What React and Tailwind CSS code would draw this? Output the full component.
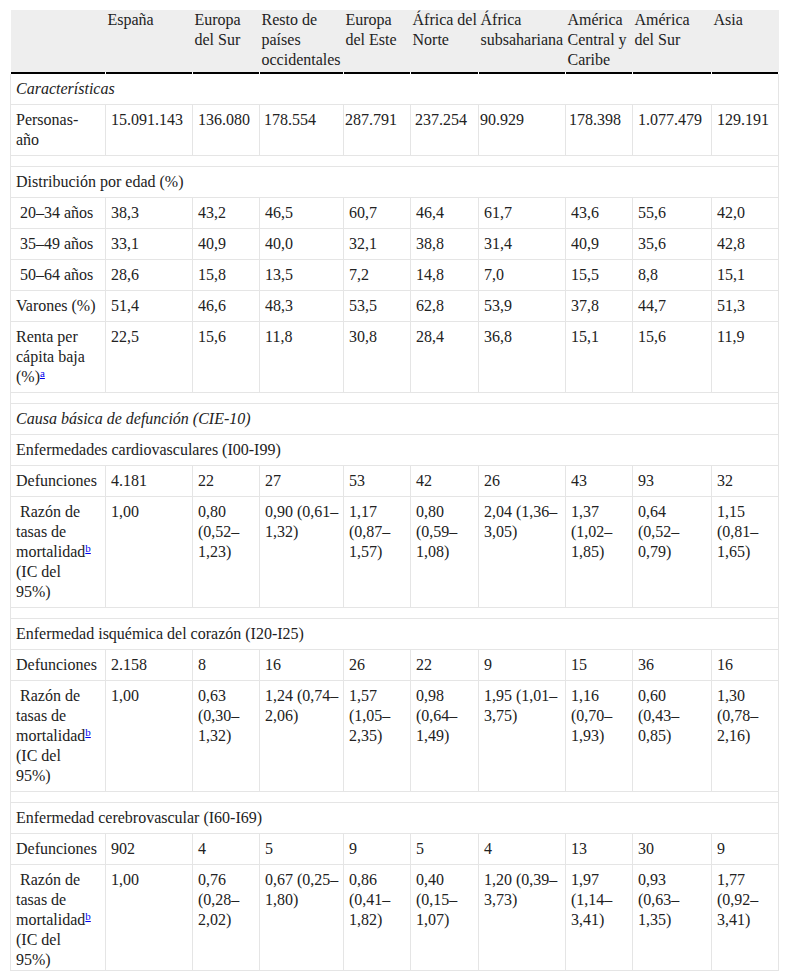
const cols = [
  "España",
  "Europa\ndel Sur",
  "Resto de\npaíses\noccidentales",
  "Europa\ndel Este",
  "África del\nNorte",
  "África\nsubsahariana",
  "América\nCentral y\nCaribe",
  "América\ndel Sur",
  "Asia",
];

const widths = [
  "w-[95px]",
  "w-[87px]",
  "w-[67px]",
  "w-[84px]",
  "w-[67px]",
  "w-[68px]",
  "w-[87px]",
  "w-[67px]",
  "w-[79px]",
  "w-[67px]",
];

// personas-año row has odd left offsets in the source
const personasPad = [
  "pl-[5px]",
  "pl-[5px]",
  "pl-[4px]",
  "pl-[1px]",
  "pl-[4px]",
  "pl-[1px]",
  "pl-[3px]",
  "pl-[5px]",
  "pl-[5px]",
];

const Sup = ({ children }) => (
  <sup className="text-[11px] text-[#0000ee] underline">{children}</sup>
);

const razon = (
  <>
    {"\u00a0Razón de\ntasas de\nmortalidad"}
    <Sup>b</Sup>
    {"\n(IC del\n95%)"}
  </>
);

const Spacer = () => (
  <tr>
    <td colSpan={10} className="border-x border-b border-[#e5e5e5] py-[5px]"></td>
  </tr>
);

const Section = ({ children, italic }) => (
  <tr>
    <td
      colSpan={10}
      className={`border-x border-b border-[#e5e5e5] pl-[5px] py-[5px] ${italic ? "italic" : ""}`}
    >
      {children}
    </td>
  </tr>
);

const Row = ({ label, values, pads, last }) => (
  <tr>
    <td className={`border-x border-b border-[#e5e5e5] pl-[5px] pr-[3px] pt-[5px] align-top ${last ? "pb-0" : "pb-[5px]"}`}>
      {label}
    </td>
    {values.map((v, i) => (
      <td
        key={i}
        className={`border-x border-b border-[#e5e5e5] pr-[3px] pt-[5px] align-top ${pads ? pads[i] : "pl-[5px]"} ${last ? "pb-0" : "pb-[5px]"}`}
      >
        {v}
      </td>
    ))}
  </tr>
);

export default function App() {
  return (
    <div className="bg-white min-h-screen pl-[10px] pt-[10px]">
      <table
        className="table-fixed border-collapse w-[768px] text-[16px] leading-[20px] text-[#222] whitespace-pre"
        style={{ fontFamily: '"Liberation Serif", "Times New Roman", serif' }}
      >
        <colgroup>
          {widths.map((w, i) => (
            <col key={i} className={w} />
          ))}
        </colgroup>
        <thead>
          <tr className="bg-[#eeeeee]">
            <th className="pb-[2px]"></th>
            {cols.map((c) => (
              <th key={c} className="text-left font-normal align-top pl-[2px] pt-0 pb-[2px]">
                {c}
              </th>
            ))}
          </tr>
          <tr>
            {widths.map((w, i) => (
              <td key={i} className="p-0 pr-px">
                <div className="h-[2px] bg-black"></div>
              </td>
            ))}
          </tr>
        </thead>
        <tbody>
          <Section italic>Características</Section>
          <Row
            label={"Personas-\naño"}
            pads={personasPad}
            values={["15.091.143", "136.080", "178.554", "287.791", "237.254", "90.929", "178.398", "1.077.479", "129.191"]}
          />
          <Spacer />
          <Section>Distribución por edad (%)</Section>
          <Row label={"\u00a020–34 años"} values={["38,3", "43,2", "46,5", "60,7", "46,4", "61,7", "43,6", "55,6", "42,0"]} />
          <Row label={"\u00a035–49 años"} values={["33,1", "40,9", "40,0", "32,1", "38,8", "31,4", "40,9", "35,6", "42,8"]} />
          <Row label={"\u00a050–64 años"} values={["28,6", "15,8", "13,5", "7,2", "14,8", "7,0", "15,5", "8,8", "15,1"]} />
          <Row label="Varones (%)" values={["51,4", "46,6", "48,3", "53,5", "62,8", "53,9", "37,8", "44,7", "51,3"]} />
          <Row
            label={
              <>
                {"Renta per\ncápita baja\n(%)"}
                <Sup>a</Sup>
              </>
            }
            values={["22,5", "15,6", "11,8", "30,8", "28,4", "36,8", "15,1", "15,6", "11,9"]}
          />
          <Spacer />
          <Section italic>Causa básica de defunción (CIE-10)</Section>
          <Section>Enfermedades cardiovasculares (I00-I99)</Section>
          <Row label="Defunciones" values={["4.181", "22", "27", "53", "42", "26", "43", "93", "32"]} />
          <Row
            label={razon}
            values={[
              "1,00",
              "0,80\n(0,52–\n1,23)",
              "0,90 (0,61–\n1,32)",
              "1,17\n(0,87–\n1,57)",
              "0,80\n(0,59–\n1,08)",
              "2,04 (1,36–\n3,05)",
              "1,37\n(1,02–\n1,85)",
              "0,64\n(0,52–\n0,79)",
              "1,15\n(0,81–\n1,65)",
            ]}
          />
          <Spacer />
          <Section>Enfermedad isquémica del corazón (I20-I25)</Section>
          <Row label="Defunciones" values={["2.158", "8", "16", "26", "22", "9", "15", "36", "16"]} />
          <Row
            label={razon}
            values={[
              "1,00",
              "0,63\n(0,30–\n1,32)",
              "1,24 (0,74–\n2,06)",
              "1,57\n(1,05–\n2,35)",
              "0,98\n(0,64–\n1,49)",
              "1,95 (1,01–\n3,75)",
              "1,16\n(0,70–\n1,93)",
              "0,60\n(0,43–\n0,85)",
              "1,30\n(0,78–\n2,16)",
            ]}
          />
          <Spacer />
          <Section>Enfermedad cerebrovascular (I60-I69)</Section>
          <Row label="Defunciones" values={["902", "4", "5", "9", "5", "4", "13", "30", "9"]} />
          <Row
            last
            label={razon}
            values={[
              "1,00",
              "0,76\n(0,28–\n2,02)",
              "0,67 (0,25–\n1,80)",
              "0,86\n(0,41–\n1,82)",
              "0,40\n(0,15–\n1,07)",
              "1,20 (0,39–\n3,73)",
              "1,97\n(1,14–\n3,41)",
              "0,93\n(0,63–\n1,35)",
              "1,77\n(0,92–\n3,41)",
            ]}
          />
        </tbody>
      </table>
    </div>
  );
}
